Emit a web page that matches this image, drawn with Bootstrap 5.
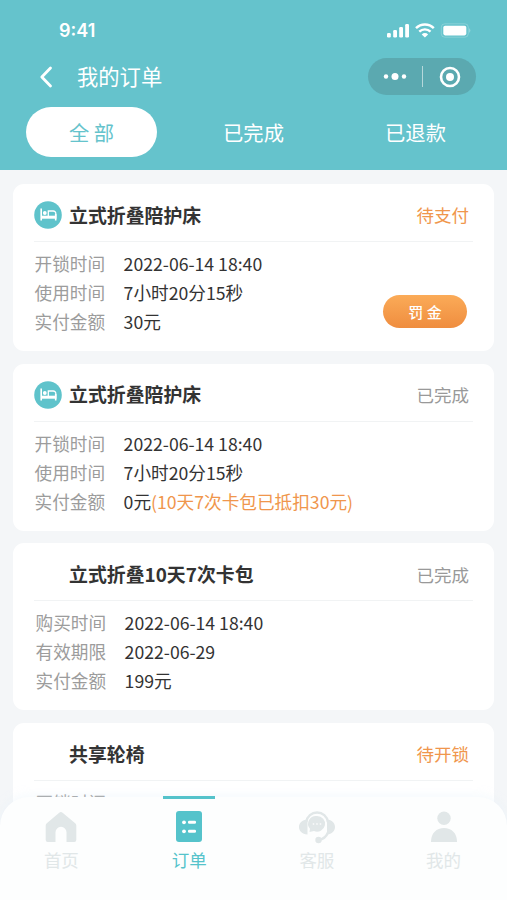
<!DOCTYPE html>
<html lang="zh-CN">
<head>
<meta charset="utf-8">
<meta name="viewport" content="width=device-width, initial-scale=1">
<title>我的订单</title>
<link href="https://cdn.jsdelivr.net/npm/bootstrap@5.3.0/dist/css/bootstrap.min.css" rel="stylesheet">
<style>
  :root { --teal: #65c3cc; --orange: #f0964c; }
  body { font-family: "Noto Sans CJK SC", sans-serif; background: #f4f6f8; color: #333; }
  svg { display: block; flex: none; }
  .screen { height: 900px; }
  .app-head { height: 170px; background: var(--teal); color: #fff; }
  .status-bar { height: 52px; padding: 10px 36px 0 59px; }
  .clock { font: 600 18px/1 Inter, sans-serif; }
  .title-bar { height: 49px; padding: 0 31px 0 37px; }
  .page-title { font-size: 21.3px; line-height: 1; margin: 0 0 2px 22px; font-weight: 400; }
  .capsule { width: 108px; height: 37px; background: #5ba9b0; }
  .order-tabs { padding: 6px 26px 0; }
  .order-tabs .nav-link { width: 131px; height: 50px; padding: 0; font-size: 20.3px; line-height: 50px; color: #fff; text-align: center; border-radius: 25px; }
  .order-tabs .nav-link.active { background: #fff; color: var(--teal); }
  .order-list { padding: 14px 13px 0; gap: 12.7px; }
  .order { height: 167px; flex: none; border: 0; border-radius: 11px; padding: 0 21px 0 21px; }
  .order-top { height: 58px; padding: 5px 4px 0 0; border-bottom: 1px solid #f1f3f4; }
  .icon-slot { width: 28px; height: 28px; margin-right: 7px; flex: none; }
  .order-name { font-size: 18.9px; line-height: 1; font-weight: 700; margin: 0; }
  .state { font-size: 17.5px; line-height: 1; color: #999; }
  .state.due, .note { color: var(--orange); }
  .facts { padding: 7px 0 0 .6px; font-size: 17.65px; line-height: 29px; margin: 0; }
  .facts dt { font-weight: 400; width: 89px; color: #9c9c9c; }
  .facts dd { margin: 0; }
  .facts.shifted { padding-left: 1.6px; }
  .btn-fine { width: 84px; height: 33px; padding: 0; border: 0; border-radius: 17px; color: #fff; font-size: 15px; font-weight: 500; line-height: 33px; background: linear-gradient(#fbab58, #ef8d3f); margin: 0 6px 23px 0; }
  .tabbar { height: 103px; background: #fdfefe; border-radius: 29px 29px 0 0; box-shadow: 0 -2px 10px rgba(225, 241, 249, .35); }
  .tabbar .nav-link { width: 127.8px; padding: 13px 0 0; color: #e1e7e8; font-size: 17.5px; line-height: 1; gap: 7px; }
  .tabbar .nav-link:first-child { padding-right: 4px; }
  .tabbar .nav-link.active { color: #55c3cb; padding-right: 2px; }
  .tab-mark { width: 52px; height: 3px; left: 163px; top: -1px; background: #55c3cb; }
</style>
<script src="https://cdn.jsdelivr.net/npm/bootstrap@5.3.0/dist/js/bootstrap.bundle.min.js"></script>
</head>
<body>
<svg width="0" height="0" class="position-absolute">
  <symbol id="bed" viewBox="0 0 28 28">
    <circle cx="14" cy="14" r="13.8" fill="#5fc3cb"/>
    <path d="M7.2 7.5V19.5M21.7 19.5V13" fill="none" stroke="#fff" stroke-width="1.6"/>
    <path d="M7 14.7h15.5v3H7z" fill="#fff"/>
    <path d="M14.3 15V10h5a2.5 2.5 0 0 1 2.5 2.5V15" fill="none" stroke="#fff" stroke-width="1.3"/>
    <circle cx="10.8" cy="12" r="1.9" fill="#fff"/>
  </symbol>
</svg>
<div class="screen position-relative overflow-hidden d-flex flex-column">
  <header class="app-head flex-shrink-0">
    <div class="status-bar d-flex align-items-center justify-content-between">
      <span class="clock">9:41</span>
      <svg width="85" height="16" viewBox="0 0 85 16" fill="#fff">
        <rect x="1" y="10" width="3.8" height="4.5" rx="1.2"/><rect x="7.2" y="7" width="3.8" height="7.5" rx="1.2"/><rect x="13.2" y="4" width="3.8" height="10.5" rx="1.2"/><rect x="19.2" y="1" width="3.8" height="13.5" rx="1.2"/>
        <g fill="none" stroke="#fff" stroke-width="2.4"><path d="M30 5.2a12.5 12.5 0 0 1 17.8 0"/><path d="M33.3 8.7a7.9 7.9 0 0 1 11.2 0"/></g>
        <path d="M35.7 11.4a4.6 4.6 0 0 1 6.4 0l-3.2 3.2z"/>
        <rect x="55.3" y=".8" width="27" height="13.4" rx="3.5" fill="none" stroke="#fff" stroke-opacity=".22"/>
        <rect x="57.3" y="2.8" width="23" height="9.6" rx="1.8"/><path d="M83.3 5q2 2.5 0 5z" fill-opacity=".4"/>
      </svg>
    </div>
    <div class="title-bar d-flex align-items-center">
      <svg width="18" height="24" viewBox="0 0 18 24"><path d="M13.5 3 4.8 12l8.7 9" fill="none" stroke="#fff" stroke-width="2.8" stroke-linecap="round" stroke-linejoin="round"/></svg>
      <h1 class="page-title">我的订单</h1>
      <div class="capsule rounded-pill ms-auto">
        <svg width="108" height="37" viewBox="0 0 108 37" fill="#fff"><circle cx="18" cy="18.5" r="2.2"/><circle cx="27" cy="18.5" r="3.5"/><circle cx="36" cy="18.5" r="2.2"/><path d="M54.5 8v21" stroke="#fff" stroke-opacity=".55"/><circle cx="82" cy="19" r="9" fill="none" stroke="#fff" stroke-width="2.6"/><circle cx="82" cy="19" r="4"/></svg>
      </div>
    </div>
    <nav class="order-tabs nav justify-content-between flex-nowrap">
      <a class="nav-link active" href="#">全 部</a>
      <a class="nav-link" href="#">已完成</a>
      <a class="nav-link" href="#">已退款</a>
    </nav>
  </header>

  <main class="order-list d-flex flex-column flex-grow-1 overflow-hidden">
    <article class="order card">
      <div class="order-top d-flex align-items-center">
        <svg class="icon-slot"><use href="#bed"/></svg>
        <h2 class="order-name">立式折叠陪护床</h2><span class="state due ms-auto">待支付</span>
      </div>
      <div class="d-flex justify-content-between align-items-end flex-grow-1">
        <dl class="facts align-self-start">
          <div class="d-flex"><dt>开锁时间</dt><dd>2022-06-14 18:40</dd></div>
          <div class="d-flex"><dt>使用时间</dt><dd>7小时20分15秒</dd></div>
          <div class="d-flex"><dt>实付金额</dt><dd>30元</dd></div>
        </dl>
        <button class="btn btn-fine" type="button">罚 金</button>
      </div>
    </article>
    <article class="order card">
      <div class="order-top d-flex align-items-center">
        <svg class="icon-slot"><use href="#bed"/></svg>
        <h2 class="order-name">立式折叠陪护床</h2><span class="state ms-auto">已完成</span>
      </div>
      <dl class="facts">
        <div class="d-flex"><dt>开锁时间</dt><dd>2022-06-14 18:40</dd></div>
        <div class="d-flex"><dt>使用时间</dt><dd>7小时20分15秒</dd></div>
        <div class="d-flex"><dt>实付金额</dt><dd>0元<span class="note">(10天7次卡包已抵扣30元)</span></dd></div>
      </dl>
    </article>
    <article class="order card">
      <div class="order-top d-flex align-items-center">
        <span class="icon-slot"></span>
        <h2 class="order-name">立式折叠10天7次卡包</h2><span class="state ms-auto">已完成</span>
      </div>
      <dl class="facts shifted">
        <div class="d-flex"><dt>购买时间</dt><dd>2022-06-14 18:40</dd></div>
        <div class="d-flex"><dt>有效期限</dt><dd>2022-06-29</dd></div>
        <div class="d-flex"><dt>实付金额</dt><dd>199元</dd></div>
      </dl>
    </article>
    <article class="order card">
      <div class="order-top d-flex align-items-center">
        <span class="icon-slot"></span>
        <h2 class="order-name">共享轮椅</h2><span class="state due ms-auto">待开锁</span>
      </div>
      <dl class="facts shifted">
        <div class="d-flex"><dt>开锁时间</dt><dd>2022-06-14 18:40</dd></div>
      </dl>
    </article>
  </main>

  <nav class="tabbar nav flex-nowrap position-absolute bottom-0 start-0 w-100">
    <a class="nav-link d-flex flex-column align-items-center" href="#">
      <svg width="34" height="34" viewBox="0 0 34 34"><path d="M15.2 2.700a2.5 2.5 0 0 1 3.4 0l12.6 10.6a3 3 0 0 1 1.1 2.3v14.500a2 2 0 0 1-2 2h-7.8v-9.8a5.5 5.5 0 0 0-11 0v9.8H3.7a2 2 0 0 1-2-2v-14.500a3 3 0 0 1 1.1-2.3z" fill="currentColor"/></svg>首页</a>
    <a class="nav-link active d-flex flex-column align-items-center" href="#">
      <svg width="34" height="34" viewBox="0 0 34 34"><rect x="4" y="1" width="26" height="31" rx="3" fill="currentColor"/><g fill="#fff"><circle cx="12" cy="12.3" r="1.9"/><circle cx="12" cy="21.3" r="1.9"/><rect x="16" y="10.8" width="8" height="3" rx="1.3"/><rect x="16" y="19.8" width="8" height="3" rx="1.3"/></g></svg>订单</a>
    <a class="nav-link d-flex flex-column align-items-center" href="#">
      <svg width="38" height="34" viewBox="0 0 38 34" fill="currentColor"><path d="M8.3 12a10.9 11 0 0 1 21.6 0M30 22.5c-2 5-5 6.8-9.5 7.5" fill="none" stroke="currentColor" stroke-width="2.4"/><path d="M9.5 9.5v15C4 24 1 21 1 17s3-7 8.500-7.5zM29 9.500v15c5-.5 8-3.500 8-7.500s-3-7-8-7.500z"/><path d="M19 6a8 7.800 0 1 1-3 15l-4.500 1 .500-3.200A8 7.800 0 0 1 19 6z"/><circle cx="20.500" cy="30" r="3.200"/><g fill="#fff" fill-opacity=".7"><circle cx="15.500" cy="14" r=".9"/><circle cx="19" cy="14" r=".9"/><circle cx="22.500" cy="14" r=".9"/></g></svg>客服</a>
    <a class="nav-link d-flex flex-column align-items-center" href="#">
      <svg width="34" height="34" viewBox="0 0 34 34" fill="currentColor"><circle cx="17" cy="8.3" r="6.7"/><path d="M4 32c0-9 5.500-14 13-14s13 5 13 14z"/></svg>我的</a>
    <span class="tab-mark position-absolute"></span>
  </nav>
</div>
</body>
</html>
